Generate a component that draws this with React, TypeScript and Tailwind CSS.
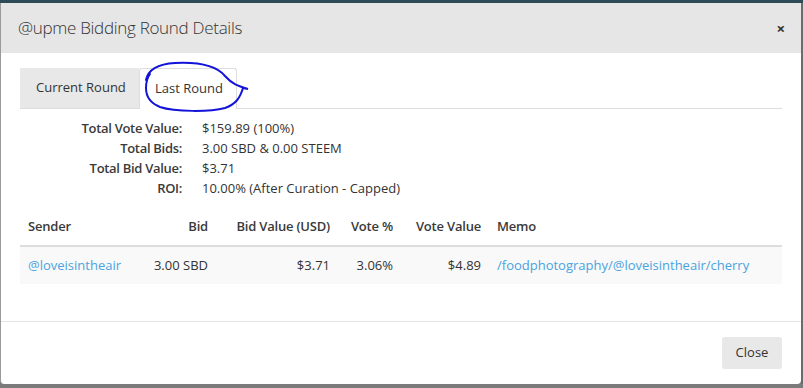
const font = { fontFamily: '"Open Sans", "Liberation Sans", sans-serif' };

const summary = [
  ["Total Vote Value:", "$159.89 (100%)"],
  ["Total Bids:", "3.00 SBD & 0.00 STEEM"],
  ["Total Bid Value:", "$3.71"],
  ["ROI:", "10.00% (After Curation - Capped)"],
];

export default function App() {
  return (
    <div className="relative h-[388px] w-[803px] overflow-hidden bg-[#7b7b7b] text-[#333]" style={font}>
      <div className="h-[3px] bg-[#2d4c57]" />
      <div className="flex">
        <div className="flex h-[381px] w-[801px] flex-col rounded-b-[4px] border-l border-[#9a9a9a] bg-white">
          {/* header */}
          <div className="flex h-[50px] shrink-0 items-center justify-between bg-[#e6e6e6] pr-[16px] pl-[17px]">
            <h4 className="text-[17px] font-light tracking-[-0.3px]">@upme Bidding Round Details</h4>
            <span className="text-[15px] leading-none font-bold text-[#333]">×</span>
          </div>

          {/* body */}
          <div className="flex-1 px-[19px] pt-[15px] text-[13px]">
            <div className="flex h-[41px] border-b border-[#ddd]">
              <div className="flex w-[119px] items-center bg-[#e8e8e8] pl-[16px]">Current Round</div>
              <div className="-mb-px flex w-[98px] items-center rounded-t-[3px] border border-b-0 border-[#ddd] bg-white pl-[15px]">
                Last Round
              </div>
            </div>

            <div className="mt-[10px]">
              {summary.map(([k, v]) => (
                <div key={k} className="flex h-[20px] items-center">
                  <div className="w-[162px] text-right font-semibold tracking-[-0.3px] text-[#3a3a3a]">{k}</div>
                  <div className="pl-[20px]">{v}</div>
                </div>
              ))}
            </div>

            <table className="mt-[10px] w-full table-fixed border-collapse">
              <colgroup>
                <col className="w-[119px]" />
                <col className="w-[77px]" />
                <col className="w-[122px]" />
                <col className="w-[63px]" />
                <col className="w-[88px]" />
                <col />
              </colgroup>
              <thead>
                <tr className="h-[37px] border-b-2 border-[#ddd] text-[#3a3a3a]">
                  <th className="px-[8px] text-left font-semibold tracking-[-0.2px]">Sender</th>
                  <th className="px-[8px] text-right font-semibold tracking-[-0.2px]">Bid</th>
                  <th className="px-[8px] text-right font-semibold tracking-[-0.2px]">Bid Value (USD)</th>
                  <th className="px-[8px] text-right font-semibold tracking-[-0.2px]">Vote %</th>
                  <th className="px-[8px] text-right font-semibold tracking-[-0.2px]">Vote Value</th>
                  <th className="px-[8px] text-left font-semibold tracking-[-0.2px]">Memo</th>
                </tr>
              </thead>
              <tbody>
                <tr className="h-[38px] bg-[#f9f9f9]">
                  <td className="px-[8px] text-[#4aa3df]">@loveisintheair</td>
                  <td className="px-[8px] text-right">3.00 SBD</td>
                  <td className="px-[8px] text-right">$3.71</td>
                  <td className="px-[8px] text-right">3.06%</td>
                  <td className="px-[8px] text-right">$4.89</td>
                  <td className="truncate px-[8px] text-[#4aa3df]">/foodphotography/@loveisintheair/cherry</td>
                </tr>
              </tbody>
            </table>
          </div>

          {/* footer */}
          <div className="flex h-[63px] shrink-0 items-center justify-end border-t border-[#e5e5e5] pr-[19px]">
            <button className="h-[32px] w-[60px] rounded-[3px] bg-[#e8e8e8] text-[13px] text-[#333]">Close</button>
          </div>
        </div>
        <div className="w-[2px] bg-[#6b6b6b]" />
      </div>

      {/* hand-drawn annotation */}
      <svg className="pointer-events-none absolute top-0 left-0" width="803" height="388">
        <path
          d="M146 80 C148 70, 158 64, 175 63 C195 62, 215 64, 225 76 C232 84, 238 86, 248 89 L243 88 C240 98, 236 104, 225 108 C210 112, 175 112, 160 107 C150 103, 146 97, 146 88 C146 83, 147 78, 150 74"
          fill="none"
          stroke="#1414d8"
          strokeWidth="2"
          strokeLinecap="round"
        />
      </svg>
    </div>
  );
}
